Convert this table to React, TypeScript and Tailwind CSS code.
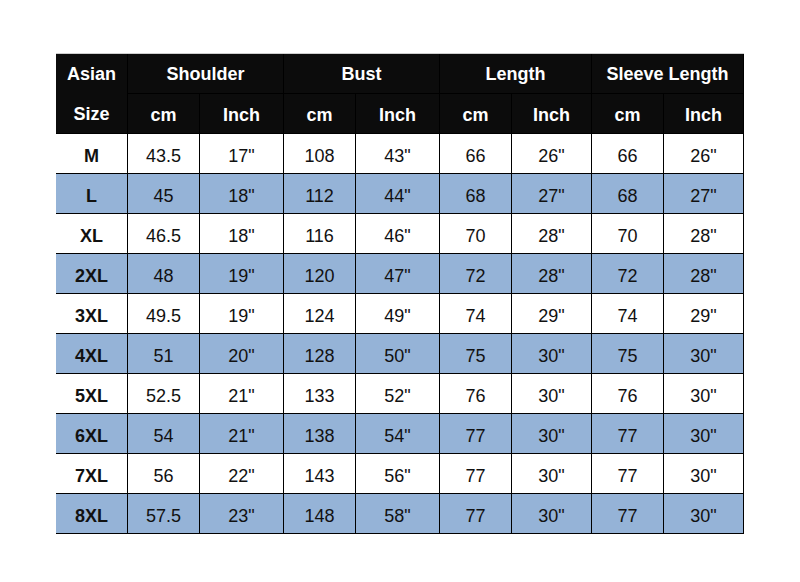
import React from "react";

const rows: string[][] = [
  ["M", "43.5", '17"', "108", '43"', "66", '26"', "66", '26"'],
  ["L", "45", '18"', "112", '44"', "68", '27"', "68", '27"'],
  ["XL", "46.5", '18"', "116", '46"', "70", '28"', "70", '28"'],
  ["2XL", "48", '19"', "120", '47"', "72", '28"', "72", '28"'],
  ["3XL", "49.5", '19"', "124", '49"', "74", '29"', "74", '29"'],
  ["4XL", "51", '20"', "128", '50"', "75", '30"', "75", '30"'],
  ["5XL", "52.5", '21"', "133", '52"', "76", '30"', "76", '30"'],
  ["6XL", "54", '21"', "138", '54"', "77", '30"', "77", '30"'],
  ["7XL", "56", '22"', "143", '56"', "77", '30"', "77", '30"'],
  ["8XL", "57.5", '23"', "148", '58"', "77", '30"', "77", '30"'],
];

const hcell =
  "flex items-center justify-center bg-[#0c0c0c] text-white font-bold border-r border-b border-black";

export default function App() {
  return (
    <div
      className="w-[800px] h-[582px] bg-white pt-[53px] pl-[56px]"
      style={{ fontFamily: '"Liberation Sans", Arial, sans-serif' }}
    >
      <div className="w-[688px] border-t border-[#cfcfcf]">
        <div className="grid grid-cols-[72px_72px_84px_72px_84px_72px_80px_72px_80px] auto-rows-[40px] text-[18px] leading-none">
          <div className="row-span-2 flex flex-col bg-[#0c0c0c] text-white font-bold border-r border-b border-black">
            <div className="h-[39px] flex items-center justify-center pt-[1px]">Asian</div>
            <div className="h-[40px] flex items-center justify-center pt-[1px]">Size</div>
          </div>
          <div className={`${hcell} col-span-2`}>Shoulder</div>
          <div className={`${hcell} col-span-2`}>Bust</div>
          <div className={`${hcell} col-span-2`}>Length</div>
          <div className={`${hcell} col-span-2`}>Sleeve Length</div>
          {Array.from({ length: 4 }).map((_, i) => (
            <React.Fragment key={i}>
              <div className={`${hcell} pt-[2px]`}>cm</div>
              <div className={`${hcell} pt-[2px]`}>Inch</div>
            </React.Fragment>
          ))}
          {rows.map((r, ri) => {
            const bg = ri % 2 === 1 ? "bg-[#95b3d7]" : "bg-white";
            return r.map((v, ci) => (
              <div
                key={`${ri}-${ci}`}
                className={`flex items-center justify-center pt-[4px] border-r border-b border-black text-[#111] ${bg} ${
                  ci === 0 ? "font-bold" : ""
                }`}
              >
                {v}
              </div>
            ));
          })}
        </div>
      </div>
    </div>
  );
}
